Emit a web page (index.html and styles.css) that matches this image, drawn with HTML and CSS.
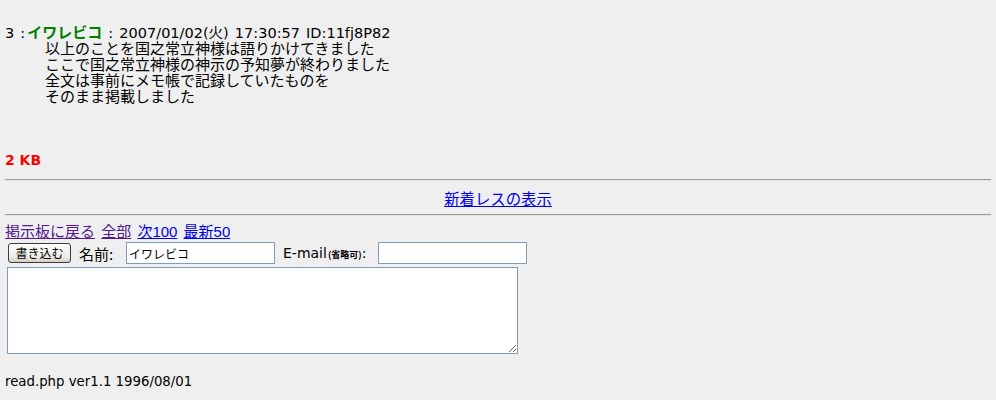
FILE: index.html
```html
<!DOCTYPE html>
<html lang="ja">
<head>
<meta charset="utf-8">
<title>read.php</title>
<link rel="stylesheet" href="styles.css">
</head>
<body>
<div class="thread">
  <dl class="res">
    <dt class="res-head">3 :<b class="name">イワレビコ</b> : 2007/01/02(火) 17:30:57 ID:11fj8P82</dt>
    <dd class="res-body">以上のことを国之常立神様は語りかけてきました<br>ここで国之常立神様の神示の予知夢が終わりました<br>全文は事前にメモ帳で記録していたものを<br>そのまま掲載しました</dd>
  </dl>
</div>
<p class="size">2 KB</p>
<hr class="rule">
<div class="center"><a href="#" class="link">新着レスの表示</a></div>
<hr class="rule">
<div class="nav">
  <a href="#" class="link visited">掲示板に戻る</a>
  <a href="#" class="link visited">全部</a>
  <a href="#" class="link">次100</a>
  <a href="#" class="link">最新50</a>
</div>
<form class="post">
  <div class="post-row">
    <button type="button" class="btn">書き込む</button>
    <label class="lbl lbl-name">名前:</label>
    <input class="field" type="text" value="イワレビコ">
    <label class="lbl lbl-mail">E-mail<span class="small">(省略可)</span>:</label>
    <input class="field" type="text" value="">
  </div>
  <textarea class="msg"></textarea>
</form>
<p class="footer">read.php ver1.1 1996/08/01</p>
</body>
</html>
```
FILE: styles.css
```css
html, body {
  margin: 0;
  padding: 0;
  background: #efefef;
}
body {
  padding: 0 5px;
  font-family: "Noto Sans CJK JP", "Liberation Sans", sans-serif;
  font-size: 14px;
  color: #000;
}
.thread {
  padding-top: 24px;
  height: 126px;
}
.res {
  margin: 0;
}
.res-head {
  font-family: "DejaVu Sans", "Noto Sans CJK JP", sans-serif;
  font-size: 14.5px;
  word-spacing: 1.5px;
  line-height: 16px;
  height: 16px;
}
.name {
  font-family: "Noto Sans CJK JP", sans-serif;
  color: #008000;
  font-weight: bold;
  font-size: 15px;
  margin-left: 2px;
}
.res-body {
  margin: 0 0 0 40px;
  font-size: 15px;
  line-height: 16px;
}
.size {
  margin: 0;
  font-family: "DejaVu Sans", sans-serif;
  color: #ff0000;
  font-weight: bold;
  font-size: 14px;
  line-height: 20px;
  height: 20px;
}
.rule {
  margin: 9px 0 0;
  height: 0;
  border: 0;
  border-top: 1px solid #9a9a9a;
  border-bottom: 1px solid #e4e4e4;
}
.center {
  text-align: center;
  line-height: 20px;
  margin-top: 7px;
  height: 20px;
  font-size: 15.4px;
}
.center + .rule {
  margin-top: 6px;
}
.link {
  color: #0000ee;
  text-decoration: underline;
}
.visited {
  color: #551a8b;
}
.nav {
  margin-top: 7px;
  font-family: "Liberation Sans", "Noto Sans CJK JP", sans-serif;
  font-size: 15px;
  word-spacing: 2px;
  line-height: 18px;
  height: 18px;
}
.post {
  margin: 0;
}
.post-row {
  display: flex;
  align-items: center;
  height: 24px;
  padding-left: 3px;
}
.btn {
  width: 63px;
  height: 20px;
  margin: 0;
  padding: 0;
  border: 1px solid #3c3c3c;
  border-radius: 3px;
  background: linear-gradient(#ffffff, #ecebe6 70%, #d6d0c5);
  font-family: "Noto Sans CJK JP", sans-serif;
  font-size: 12px;
  line-height: 16px;
  color: #000;
}
.lbl {
  font-size: 14px;
  white-space: nowrap;
}
.lbl-name {
  margin-left: 8px;
  width: 47px;
  font-size: 15px;
}
.lbl-mail {
  margin-left: 8px;
  width: 95px;
  font-family: "DejaVu Sans", "Noto Sans CJK JP", sans-serif;
  font-size: 14px;
}
.small {
  font-family: "Noto Sans CJK JP", sans-serif;
  font-size: 9px;
  font-weight: bold;
  margin-left: 1px;
}
.field {
  box-sizing: border-box;
  width: 149px;
  height: 22px;
  margin: 0;
  padding: 0 2px;
  border: 1px solid #7f9db9;
  background: #fff;
  font-family: "Noto Sans CJK JP", sans-serif;
  font-size: 12px;
}
.msg {
  display: block;
  box-sizing: border-box;
  width: 511px;
  height: 87px;
  margin: 2px 0 0 2px;
  border: 1px solid #7f9db9;
  background: #fff;
}
.footer {
  margin: 20px 0 0;
  font-family: "DejaVu Sans", sans-serif;
  font-size: 13.3px;
  line-height: 16px;
}
```
